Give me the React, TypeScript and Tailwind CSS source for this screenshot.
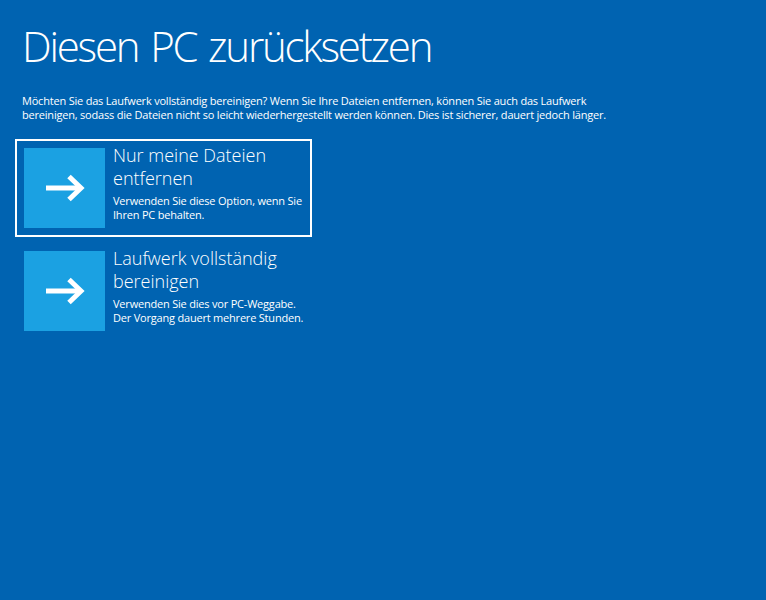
import React from 'react';

const Arrow: React.FC = () => (
  <svg width="40" height="28" viewBox="0 0 40 28" fill="none" stroke="white" strokeWidth="5" strokeLinecap="butt" strokeLinejoin="miter">
    <path d="M1 14 H35" />
    <path d="M24 2.5 L36 14 L24 25.5" />
  </svg>
);

type OptionProps = {
  title: string[];
  lines: string[];
  selected?: boolean;
};

const Option: React.FC<OptionProps> = ({ title, lines, selected }) => (
  <div
    className={`w-[297px] p-[7px] border-2 ${selected ? 'border-white' : 'border-transparent'} flex gap-2`}
  >
    <div className="w-[81px] h-[80px] shrink-0 bg-[#1ba1e2] flex items-center justify-center">
      <Arrow />
    </div>
    <div className="-mt-[4px] whitespace-nowrap">
      <div className="text-[18px] leading-[23px] font-light">
        {title.map((t) => (
          <div key={t}>{t}</div>
        ))}
      </div>
      <div className="text-[11px] leading-[14px] mt-[4px] tracking-[-0.2px]">
        {lines.map((l) => (
          <div key={l}>{l}</div>
        ))}
      </div>
    </div>
  </div>
);

export default function App() {
  return (
    <div className="w-[766px] h-[600px] bg-[#0063b1] text-white font-['Open_Sans',sans-serif] overflow-hidden">
      <div className="pl-[22px] pt-[16px]">
        <h1 className="text-[42px] leading-[60px] font-light tracking-[-2.2px] [word-spacing:3px]">Diesen PC zurücksetzen</h1>
        <p className="text-[11px] leading-[14px] mt-[18px] w-[610px] tracking-[-0.2px]">
          Möchten Sie das Laufwerk vollständig bereinigen? Wenn Sie Ihre Dateien entfernen, können Sie auch das Laufwerk
          <br />
          bereinigen, sodass die Dateien nicht so leicht wiederhergestellt werden können. Dies ist sicherer, dauert jedoch länger.
        </p>
      </div>
      <div className="pl-[15px] mt-[17px] flex flex-col gap-[5px]">
        <Option
          selected
          title={['Nur meine Dateien', 'entfernen']}
          lines={['Verwenden Sie diese Option, wenn Sie', 'Ihren PC behalten.']}
        />
        <Option
          title={['Laufwerk vollständig', 'bereinigen']}
          lines={['Verwenden Sie dies vor PC-Weggabe.', 'Der Vorgang dauert mehrere Stunden.']}
        />
      </div>
    </div>
  );
}
